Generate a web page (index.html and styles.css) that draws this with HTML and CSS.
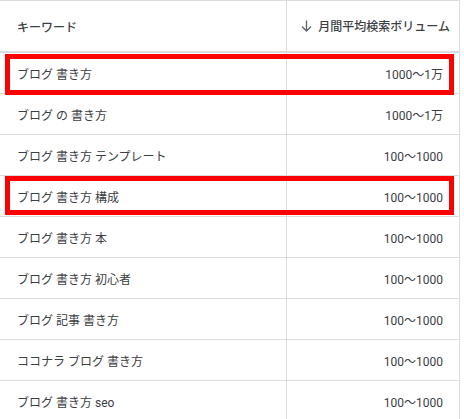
FILE: index.html
```html
<!DOCTYPE html>
<html lang="ja">
<head>
<meta charset="utf-8">
<link rel="stylesheet" href="styles.css">
</head>
<body>
<div class="wrap">
  <table class="kw">
    <thead>
      <tr>
        <th class="c-kw">キーワード</th>
        <th class="c-vol"><span class="sort"><svg class="arrow" width="11" height="12" viewBox="0 0 11 12"><path d="M5.5 0.5V11M1 6.5L5.5 11L10 6.5" fill="none" stroke="#5f6368" stroke-width="1.3"/></svg>月間平均検索ボリューム</span></th>
      </tr>
    </thead>
    <tbody>
      <tr><td class="c-kw">ブログ 書き方</td><td class="c-vol">1000～1万</td></tr>
      <tr><td class="c-kw">ブログ の 書き方</td><td class="c-vol">1000～1万</td></tr>
      <tr><td class="c-kw">ブログ 書き方 テンプレート</td><td class="c-vol">100～1000</td></tr>
      <tr><td class="c-kw">ブログ 書き方 構成</td><td class="c-vol">100～1000</td></tr>
      <tr><td class="c-kw">ブログ 書き方 本</td><td class="c-vol">100～1000</td></tr>
      <tr><td class="c-kw">ブログ 書き方 初心者</td><td class="c-vol">100～1000</td></tr>
      <tr><td class="c-kw">ブログ 記事 書き方</td><td class="c-vol">100～1000</td></tr>
      <tr><td class="c-kw">ココナラ ブログ 書き方</td><td class="c-vol">100～1000</td></tr>
      <tr><td class="c-kw">ブログ 書き方 seo</td><td class="c-vol">100～1000</td></tr>
    </tbody>
  </table>
  <div class="mark mark-1"></div>
  <div class="mark mark-2"></div>
</div>
</body>
</html>
```
FILE: styles.css
```css
html, body {
  margin: 0;
  padding: 0;
  background: #fff;
}
body {
  font-family: Roboto, "Noto Sans CJK JP", sans-serif;
  font-size: 12px;
  color: #3c4043;
}
.wrap {
  position: relative;
  width: 464px;
  height: 419px;
  overflow: hidden;
}
.kw {
  border-collapse: collapse;
  width: 460px;
  table-layout: fixed;
  border-top: 1px solid #dadce0;
}
.kw th, .kw td {
  padding: 0;
  white-space: nowrap;
}
.kw th {
  height: 50px;
  font-weight: 500;
  color: #3c4043;
  border-bottom: 2px solid #dadce0;
  border-right: 1px solid #dadce0;
}
.kw td {
  height: 40px;
  border-bottom: 1px solid #dadce0;
  border-right: 1px solid #dadce0;
}
.c-kw {
  width: 269px;
  padding-left: 17px !important;
  text-align: left;
}
.kw th.c-vol {
  text-align: right;
  padding-right: 9px !important;
}
.kw td.c-vol {
  text-align: right;
  padding-right: 16px !important;
}
.sort {
  display: inline-flex;
  align-items: center;
  gap: 6px;
}
.arrow {
  display: block;
}
.mark {
  position: absolute;
  border: 5px solid #ff0000;
  box-sizing: border-box;
  left: 5px;
  width: 449px;
}
.mark-1 {
  top: 54px;
  height: 41px;
}
.mark-2 {
  top: 176px;
  height: 39px;
}
```
